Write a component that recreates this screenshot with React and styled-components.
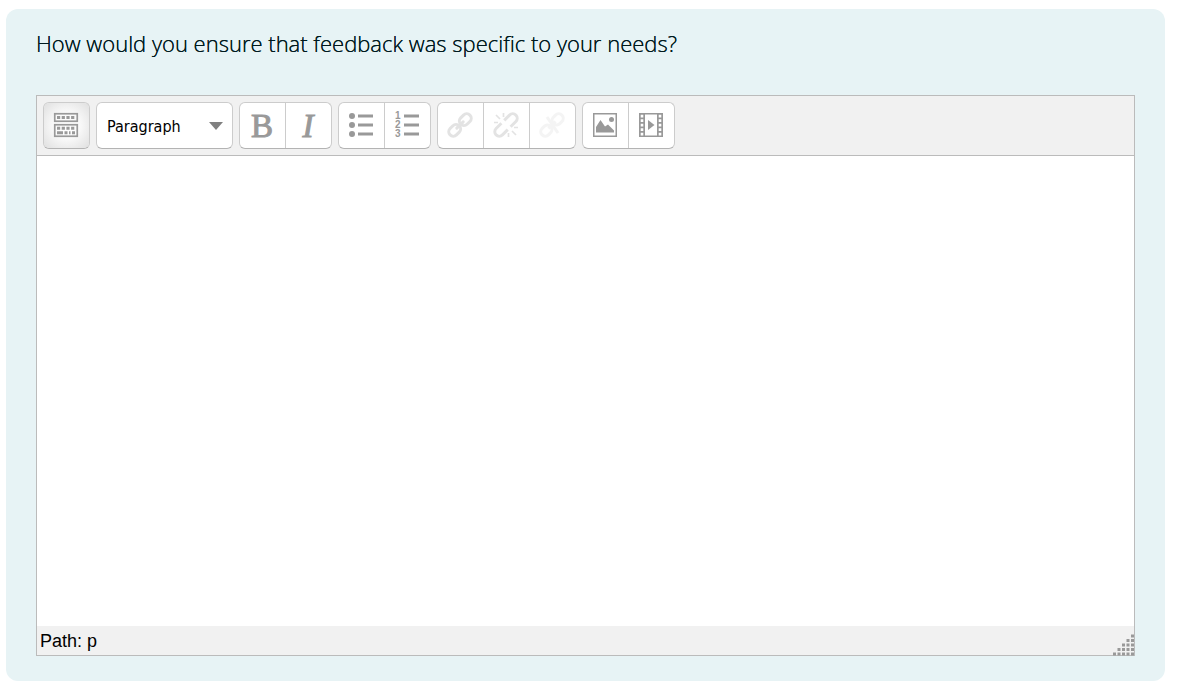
import React from "react";
import styled, { createGlobalStyle } from "styled-components";

const GlobalStyle = createGlobalStyle`
  *, *::before, *::after { box-sizing: border-box; }
  body { margin: 0; background: #fff; }
`;

const Question = styled.main`
  margin: 9px 15px 6px 6px;
  padding: 17px 30px 25px;
  border-radius: 12px;
  background: #e7f3f5;
`;

const Prompt = styled.label`
  display: block;
  margin-bottom: 35px;
  color: #001a1e;
  font: 300 22px/34px "Open Sans", "Noto Sans", sans-serif;
  text-shadow: 0 0 0 currentColor;
`;

const Editor = styled.div`
  border: 1px solid #bbb;
  background: #fff;
`;

const Toolbar = styled.div`
  display: flex;
  flex-wrap: wrap;
  gap: 6px;
  padding: 6px;
  border-bottom: 1px solid #bbb;
  background: #f1f1f1;
`;

const Group = styled.div`
  display: flex;
  border: 1px solid #ccc;
  border-bottom-color: #b3b3b3;
  border-radius: 6px;
  background: #fff;
  overflow: hidden;
`;

const ToolButton = styled.button`
  display: grid;
  place-items: center start;
  width: 45px;
  height: 45px;
  padding: 0 0 1px 10px;
  border: 0;
  color: #999;
  background: ${(p) =>
    p.$pressed ? "radial-gradient(circle, #fff 0%, #fafafa 40%, #dfdfdf 100%)" : "transparent"};
  opacity: ${(p) => p.$opacity || 1};

  & > svg { display: block; overflow: visible; }
`;

const Divider = styled.span`
  width: 1px;
  background: #ccc;
`;

const Letter = styled.span`
  width: 24px;
  padding-top: 2px;
  text-align: center;
  font: ${(p) => (p.$italic ? "italic 400" : "400")} 33px/42px "Liberation Serif", serif;
  -webkit-text-stroke: 1px #999;
`;

const FormatBox = styled(Group)`
  position: relative;
`;

const FormatSelect = styled.select`
  appearance: none;
  width: 135px;
  height: 45px;
  padding: 2px 30px 0 10px;
  border: 0;
  background: transparent;
  color: #000;
  font: 16px "DejaVu Sans Condensed", "Noto Sans", sans-serif;
`;

const Arrow = styled.svg`
  position: absolute;
  right: 9px;
  top: 19px;
  pointer-events: none;
`;

const TextArea = styled.textarea`
  display: block;
  width: 100%;
  height: 470px;
  padding: 12px;
  border: 0;
  outline: 0;
  resize: none;
  font: 16px "Open Sans", sans-serif;
`;

const StatusBar = styled.div`
  display: flex;
  justify-content: space-between;
  align-items: flex-end;
  height: 29px;
  padding-left: 3px;
  background: #f1f1f1;
  color: #000;
  font: 18px/27px "Liberation Sans", sans-serif;
`;

const Icon = ({ children }) => (
  <svg width="24" height="24" viewBox="0 0 24 24" fill="none" stroke="currentColor" aria-hidden="true">
    {children}
  </svg>
);

const KeyboardIcon = () => (
  <Icon>
    <rect x=".75" y=".75" width="22.5" height="7.5" strokeWidth="1.7" />
    <rect x=".75" y="11.75" width="22.5" height="11.5" strokeWidth="1.7" />
    <g strokeWidth="3">
      <path d="M3 4.5H21" strokeDasharray="3.2 1.5" />
      <path d="M3 15.3H21" strokeDasharray="3.2 1.5" />
      <path d="M3 19.7H21" strokeDasharray="6 1.5 3 1.5 1.5 1.5" />
    </g>
  </Icon>
);

const ListLines = () => <path d="M9 3H24M9 12H24M9 21H24" strokeWidth="3" />;

const BulletIcon = () => (
  <Icon>
    <g fill="currentColor" stroke="none">
      {[3, 12, 21].map((y) => <circle key={y} cx="3" cy={y} r="3" />)}
    </g>
    <ListLines />
  </Icon>
);

const NumberIcon = () => (
  <Icon>
    <g fill="currentColor" stroke="none" fontFamily="Liberation Sans" fontWeight="700" fontSize="10">
      <text x="0" y="6">1</text>
      <text x="0" y="15">2</text>
      <text x="0" y="24">3</text>
    </g>
    <ListLines />
  </Icon>
);

const LinkIcon = () => (
  <Icon>
    <g transform="rotate(-45 12 12)" strokeWidth="3">
      <rect x="-2" y="7.5" width="13" height="9" rx="4.5" />
      <rect x="13" y="7.5" width="13" height="9" rx="4.5" />
      <path d="M7.5 12H16.5" strokeLinecap="round" />
    </g>
  </Icon>
);

const UnlinkIcon = () => (
  <Icon>
    <g transform="rotate(-45 12 12)" strokeWidth="3">
      <path d="M10 7.5H2.5a4.5 4.5 0 0 0 0 9H10" />
      <path d="M14 7.5H21.5a4.5 4.5 0 0 1 0 9H14" />
    </g>
    <path d="M9.5 0V4M2 2L6 6M0 9.5H4M20 14.5H24M18 18L22 22M14.5 20V24" strokeWidth="1.7" />
  </Icon>
);

const NoAutoLinkIcon = () => (
  <Icon>
    <g transform="rotate(-45 12 12)" strokeWidth="3">
      <rect x="-2" y="7.5" width="12" height="9" rx="4.5" />
      <rect x="14" y="7.5" width="12" height="9" rx="4.5" />
      <path d="M7 12H17" />
    </g>
    <path d="M7 4L18 20" strokeWidth="3" />
  </Icon>
);

const ImageIcon = () => (
  <Icon>
    <rect x=".75" y=".75" width="22.5" height="22.5" strokeWidth="1.5" />
    <path d="M3 19.5V14L7.5 7L12 13.5L15 11.5L21 17.5V19.5Z" fill="currentColor" stroke="none" />
    <circle cx="18.5" cy="6.5" r="2.5" fill="currentColor" stroke="none" />
  </Icon>
);

const FilmIcon = () => (
  <Icon>
    <rect x=".75" y=".75" width="22.5" height="22.5" strokeWidth="1.5" />
    <path d="M3 0V24M21 0V24" strokeWidth="6" />
    <path d="M3 1.8V24M21 1.8V24" stroke="#fff" strokeWidth="2.6" strokeDasharray="2.6 1.9" />
    <path d="M9 7L15.5 12L9 17Z" fill="currentColor" stroke="none" />
  </Icon>
);

const ResizeGrip = () => (
  <svg width="23" height="22" viewBox="0 0 23 22" fill="#999" overflow="visible" aria-hidden="true">
    {[0, 1, 2, 3, 4].flatMap((row) =>
      Array.from({ length: row + 1 }, (_, i) => (
        <rect key={`${row}-${i}`} x={20 - i * 4.5} y={1.5 + row * 4.5} width="3" height="3" />
      ))
    )}
  </svg>
);

const GROUPS = [
  [
    { label: "Bold", icon: <Letter>B</Letter> },
    { label: "Italic", icon: <Letter $italic>I</Letter> },
  ],
  [
    { label: "Unordered list", icon: <BulletIcon /> },
    { label: "Ordered list", icon: <NumberIcon /> },
  ],
  [
    { label: "Insert link", icon: <LinkIcon />, opacity: 0.27 },
    { label: "Unlink", icon: <UnlinkIcon />, opacity: 0.27 },
    { label: "Prevent automatic linking", icon: <NoAutoLinkIcon />, opacity: 0.1 },
  ],
  [
    { label: "Insert image", icon: <ImageIcon /> },
    { label: "Insert media", icon: <FilmIcon /> },
  ],
];

export default function App() {
  return (
    <>
      <GlobalStyle />
      <Question>
        <Prompt htmlFor="answer">How would you ensure that feedback was specific to your needs?</Prompt>
        <Editor>
          <Toolbar role="toolbar" aria-label="Formatting">
            <Group>
              <ToolButton type="button" aria-label="Toolbar toggle" aria-pressed="true" $pressed>
                <KeyboardIcon />
              </ToolButton>
            </Group>
            <FormatBox>
              <FormatSelect aria-label="Format" defaultValue="p">
                <option value="p">Paragraph</option>
              </FormatSelect>
              <Arrow width="14" height="8" viewBox="0 0 14 8" aria-hidden="true">
                <path d="M0 0H14L7 8Z" fill="#808080" />
              </Arrow>
            </FormatBox>
            {GROUPS.map((group) => (
              <Group key={group[0].label}>
                {group.map((tool, i) => (
                  <React.Fragment key={tool.label}>
                    {i > 0 && <Divider />}
                    <ToolButton type="button" aria-label={tool.label} $opacity={tool.opacity}>
                      {tool.icon}
                    </ToolButton>
                  </React.Fragment>
                ))}
              </Group>
            ))}
          </Toolbar>
          <TextArea id="answer" />
          <StatusBar>
            <span>Path: p</span>
            <ResizeGrip />
          </StatusBar>
        </Editor>
      </Question>
    </>
  );
}
